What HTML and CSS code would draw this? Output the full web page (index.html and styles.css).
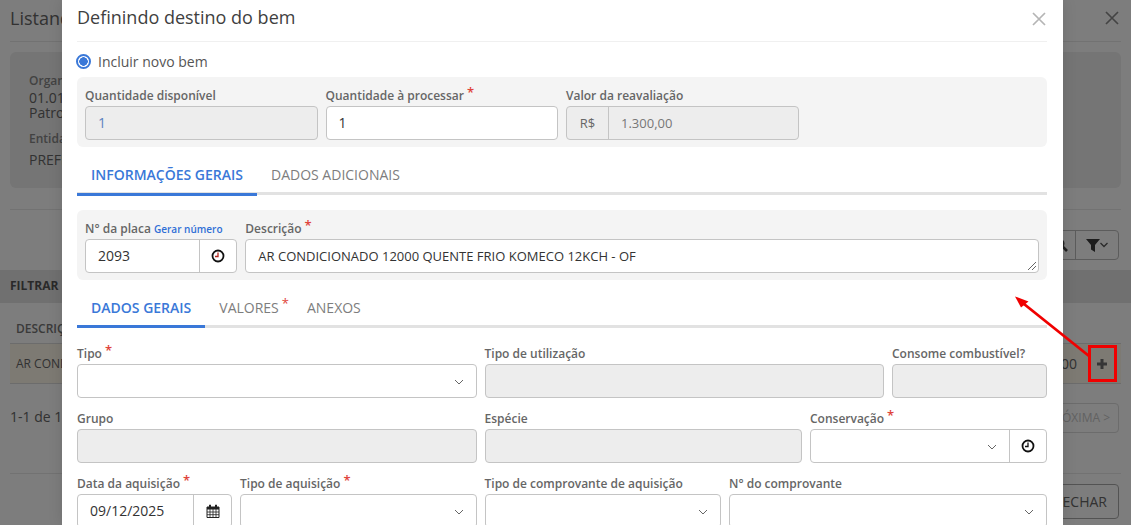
FILE: index.html
```html
<!DOCTYPE html>
<html lang="pt-BR">
<head>
<meta charset="utf-8">
<title>Definindo destino do bem</title>
<link rel="stylesheet" href="styles.css">
</head>
<body>
<div class="page">
  <div class="page-head"><span>Listando bens</span><svg class="page-close" width="14" height="14" viewBox="0 0 14 14"><path d="M1 1l12 12M13 1 1 13" stroke="#8c8c8c" stroke-width="1.700"/></svg></div>
  <div class="org-card">
    <div class="org-label">Organograma</div>
    <div class="org-value">01.01<br>Patrocínio</div>
    <div class="org-label second">Entidade</div>
    <div class="org-value">PREFEITURA</div>
  </div>
  <div class="tools">
    <div class="tool-group">
      <span class="tool search"><svg width="14" height="14" viewBox="0 0 14 14"><circle cx="5.500" cy="5.500" r="4" fill="none" stroke="#444" stroke-width="2"/><path d="M8.500 8.500 13 13" stroke="#444" stroke-width="2.600"/></svg></span>
      <span class="tool"><svg width="22" height="13" viewBox="0 0 22 13"><path d="M0 0h14L9 6v7L5 10.500V6z" fill="#3c3c3c"/><path d="M14.500 4l3.500 3.500L21.500 4" fill="none" stroke="#555" stroke-width="1.300"/></svg></span>
    </div>
  </div>
  <div class="filter-bar">FILTRAR</div>
  <div class="table-head">DESCRIÇÃO</div>
  <div class="table-row"><span>AR CONDICIONADO</span><span class="row-end"><span>1.300,00</span><span class="row-add"><svg width="10" height="10" viewBox="0 0 10 10"><path d="M0 5h10M5 0v10" stroke="#6e6e6e" stroke-width="3"/></svg></span></span></div>
  <div class="pager"><span>1-1 de 1</span><span class="next">PRÓXIMA &gt;</span></div>
  <div class="foot"><span class="close-btn">FECHAR</span></div>
</div>

<div class="overlay"></div>

<section class="modal">
  <header class="modal-head"><h1>Definindo destino do bem</h1><svg class="modal-x" width="14" height="14" viewBox="0 0 14 14"><path d="M1 1l12 12M13 1 1 13" stroke="#b5b5b5" stroke-width="1.700"/></svg></header>
  <label class="radio"><span class="radio-dot"></span>Incluir novo bem</label>

  <div class="panel grid-panel">
    <div class="field c3"><label>Quantidade disponível</label><div class="input off blue">1</div></div>
    <div class="field c3"><label>Quantidade à processar<i>*</i></label><div class="input">1</div></div>
    <div class="field c3"><label>Valor da reavaliação</label><div class="input off joined"><span class="prefix">R$</span><span class="val small">1.300,00</span></div></div>
  </div>

  <nav class="tabs first"><span class="tab on">INFORMAÇÕES GERAIS</span><span class="tab">DADOS ADICIONAIS</span></nav>

  <div class="panel grid-panel second">
    <div class="field c2"><label>N° da placa <a>Gerar número</a></label>
      <div class="input joined"><span class="val">2093</span><span class="addon"><svg width="14" height="14" viewBox="0 0 14 14"><circle cx="7" cy="7" r="5.500" fill="none" stroke="#111" stroke-width="1.800"/><path d="M7 3.500V7.500H4" fill="none" stroke="#b3261e" stroke-width="1.300"/></svg></span></div></div>
    <div class="field c10"><label>Descrição<i>*</i></label>
      <div class="input area">AR CONDICIONADO 12000 QUENTE FRIO KOMECO 12KCH - OF<svg class="grip" width="10" height="10" viewBox="0 0 10 10"><path d="M1 9 9 1M5 9l4-4" stroke="#666" stroke-width="1"/></svg></div></div>
  </div>

  <nav class="tabs sub"><span class="tab on">DADOS GERAIS</span><span class="tab">VALORES<i>*</i></span><span class="tab">ANEXOS</span></nav>

  <div class="grid row-a">
    <div class="field c5"><label>Tipo<i>*</i></label><div class="input select"><svg class="chev" width="10" height="6" viewBox="0 0 10 6"><path d="M1 1l4 4 4-4" fill="none" stroke="#666" stroke-width="1"/></svg></div></div>
    <div class="field c5"><label>Tipo de utilização</label><div class="input off"></div></div>
    <div class="field c2"><label>Consome combustível?</label><div class="input off"></div></div>
  </div>
  <div class="grid row-b">
    <div class="field c5"><label>Grupo</label><div class="input off"></div></div>
    <div class="field c4 snap-end"><label>Espécie</label><div class="input off"></div></div>
    <div class="field c3 snap-start"><label>Conservação<i>*</i></label>
      <div class="input joined"><span class="val select"><svg class="chev" width="10" height="6" viewBox="0 0 10 6"><path d="M1 1l4 4 4-4" fill="none" stroke="#666" stroke-width="1"/></svg></span><span class="addon"><svg width="14" height="14" viewBox="0 0 14 14"><circle cx="7" cy="7" r="5.500" fill="none" stroke="#111" stroke-width="1.800"/><path d="M7 3.500V7.500H4" fill="none" stroke="#111" stroke-width="1.300"/></svg></span></div></div>
  </div>
  <div class="grid row-c">
    <div class="field c2"><label>Data da aquisição<i>*</i></label>
      <div class="input joined"><span class="val">09/12/2025</span><span class="addon wide"><svg width="14" height="14" viewBox="0 0 14 14"><path d="M1 3h12v10.500H1z" fill="none" stroke="#222" stroke-width="1"/><path d="M1 3h12v2.500H1zM3 .8h2v3H3zM9 .8h2v3H9z" fill="#222"/><path d="M1 8h12M1 10.700h12M4 5v8M7 5v8M10 5v8" stroke="#222" stroke-width=".8"/></svg></span></div></div>
    <div class="field c3"><label>Tipo de aquisição<i>*</i></label><div class="input select"><svg class="chev" width="10" height="6" viewBox="0 0 10 6"><path d="M1 1l4 4 4-4" fill="none" stroke="#666" stroke-width="1"/></svg></div></div>
    <div class="field c3"><label>Tipo de comprovante de aquisição</label><div class="input select"><svg class="chev" width="10" height="6" viewBox="0 0 10 6"><path d="M1 1l4 4 4-4" fill="none" stroke="#666" stroke-width="1"/></svg></div></div>
    <div class="field c4"><label>N° do comprovante</label><div class="input select"><svg class="chev" width="10" height="6" viewBox="0 0 10 6"><path d="M1 1l4 4 4-4" fill="none" stroke="#666" stroke-width="1"/></svg></div></div>
  </div>
</section>

<div class="mark-box"></div>
<svg class="mark-arrow" width="1131" height="525" viewBox="0 0 1131 525"><path d="M1089 356 1024 304" stroke="#f00000" stroke-width="2.800"/><path d="M1015 296.500l13.500 5-7.500 6z" fill="#f00000"/></svg>
</body>
</html>
```
FILE: styles.css
```css
* { box-sizing: border-box; }
html, body { margin: 0; height: 525px; overflow: hidden; }
body { font-family: "Open Sans", "Liberation Sans", sans-serif; color: #444; background: #fff; position: relative; }

.page { height: 525px; padding: 0 10px; background: #fff; color: #666; }
.page-head { height: 42px; display: flex; justify-content: space-between; align-items: center; font-size: 18px; border-bottom: 1px solid #e8e8e8; padding-bottom: 6px; }
.page-close { margin-right: 2px; margin-top: 1px; }
.org-card { margin-top: 10px; height: 136px; background: #eee; border-radius: 6px; padding: 21px 19px; font-size: 14px; line-height: 15px; }
.org-label { font-size: 12px; font-weight: 600; color: #888; margin-bottom: 2px; }
.org-label.second { margin-top: 11px; margin-bottom: 6px; }
.tools { margin-top: 21px; border-top: 1px solid #e8e8e8; height: 61px; display: flex; justify-content: flex-end; padding: 20px 2px 0 0; }
.tool-group { display: flex; height: 30px; border: 1px solid #bbb; border-radius: 4px; }
.tool { width: 43px; display: flex; align-items: center; justify-content: center; border-left: 1px solid #bbb; }
.tool.search { justify-content: flex-end; padding-right: 7px; }
.filter-bar { height: 33px; background: #e5e5e5; margin: 0 -10px; padding: 0 10px; font-size: 12px; font-weight: 700; line-height: 31px; color: #555; }
.table-head { height: 40px; padding: 17px 6px 0; font-size: 12px; font-weight: 600; color: #777; }
.table-row { height: 41px; background: #fff8eb; padding: 0 5px 0 6px; display: flex; justify-content: space-between; align-items: center; font-size: 12px; border-top: 1px solid #ddd; border-bottom: 1px solid #ddd; }
.row-end { display: flex; align-items: center; gap: 11px; font-size: 14px; }
.row-add { width: 28px; display: flex; align-items: center; justify-content: center; }
.pager { height: 90px; padding-top: 23px; display: flex; justify-content: space-between; align-items: flex-start; font-size: 14px; line-height: 19px; border-bottom: 1px solid #e8e8e8; }
.next { margin-right: 2px; margin-top: -4px; height: 30px; padding: 0 8px; line-height: 28px; border: 1px solid #dcdcdc; border-radius: 4px; font-size: 12px; color: #c8c8c8; width: 90px; text-align: right; white-space: nowrap; }
.foot { display: flex; justify-content: flex-end; padding: 10px 2px 0 0; }
.close-btn { border: 1px solid #aaa; border-radius: 4px; font-size: 14px; padding: 7px 11px; height: 35px; width: 90px; text-align: right; }

.overlay { position: absolute; inset: 0; background: rgba(0, 0, 0, .51); }

.modal { position: absolute; left: 62px; top: 0; width: 1001px; height: 525px; overflow: hidden; background: #fff; padding: 0 16px 0 15px; box-shadow: 0 0 14px rgba(0, 0, 0, .12); }
.modal-head { height: 42px; display: flex; justify-content: space-between; align-items: center; border-bottom: 1px solid #f0f0f0; padding-bottom: 7px; }
.modal-head h1 { margin: 0; font-size: 18px; line-height: 24px; font-weight: 400; color: #3f3f3f; }
.modal-x { margin-right: 1px; margin-top: 3px; }

.radio { height: 35px; display: flex; align-items: center; gap: 7px; font-size: 14px; color: #555; padding-top: 3px; margin-left: -1px; }
.radio-dot { width: 15px; height: 15px; border-radius: 50%; border: 2px solid #3a78d8; background: radial-gradient(circle, #3a78d8 0 4px, #fff 4.500px); }

.panel { background: #f4f4f4; border-radius: 6px; padding: 8px; height: 70px; }
.grid-panel, .grid { display: grid; grid-template-columns: repeat(12, minmax(0, 1fr)); column-gap: 8px; }
.panel.second { margin-top: 15px; }
.c2 { grid-column: span 2; }
.c3 { grid-column: span 3; }
.c4 { grid-column: span 4; }
.c5 { grid-column: span 5; }
.c10 { grid-column: span 10; }
.snap-end { margin-right: .5px; }
.snap-start { margin-left: -.5px; }

.field { min-width: 0; display: flex; flex-direction: column; }
.field label { height: 21px; font-size: 12px; line-height: 21px; font-weight: 600; color: #666; white-space: nowrap; }
.field label i { font-style: normal; color: #e0433a; font-size: 13px; line-height: 13px; margin-left: 3px; position: relative; top: -3px; }
.field label a { color: #2f6fd6; font-size: 10px; }

.input { height: 34px; border: 1px solid #c4c4c4; border-radius: 4px; background: #fff; font-size: 14px; line-height: 32px; color: #333; padding: 0 12px; position: relative; flex: none; }
.input.off { background: #ededed; }
.input.blue { color: #5b82c0; }
.input.joined { padding: 0; display: flex; overflow: hidden; }
.input.select { padding: 0; }
.chev { position: absolute; right: 12px; top: 14px; }
.val { flex: 1; padding: 0 12px; position: relative; color: #333; }
.input.off .val { color: #777; }
.val.small { font-size: 13px; }
.prefix { width: 42px; text-align: center; border-right: 1px solid #c4c4c4; color: #666; font-size: 13px; }
.addon { width: 37px; display: flex; align-items: center; justify-content: center; border-left: 1px solid #c4c4c4; flex: none; }
.addon.wide { width: 38px; }
.area { padding-right: 16px; font-size: 13px; }
.grip { position: absolute; right: 1px; bottom: 1px; }

.tabs { display: flex; border-bottom: 3px solid #e2e2e2; font-size: 14px; font-weight: 400; color: #7d7d7d; }
.tabs.first { height: 48px; padding-top: 11px; }
.tabs.sub { height: 48px; padding-top: 10px; }
.tab { padding: 7px 14px 0; height: 38px; margin-bottom: -3px; white-space: nowrap; }
.tabs.sub .tab { padding-top: 8px; }
.tab.on { color: #3a78d8; font-weight: 600; border-bottom: 3px solid #3a78d8; }
.tab i { font-style: normal; color: #e0433a; font-size: 13px; position: relative; top: -5px; margin-left: 3px; line-height: 13px; }
.tabs.sub .tab + .tab + .tab { padding-left: 4px; }

.row-a { margin-top: 15px; }
.row-b { margin-top: 10px; }
.row-c { margin-top: 10px; }

.mark-box { position: absolute; left: 1088px; top: 345px; width: 29px; height: 37px; border: 3px solid #f00000; }
.mark-arrow { position: absolute; left: 0; top: 0; pointer-events: none; }
```
